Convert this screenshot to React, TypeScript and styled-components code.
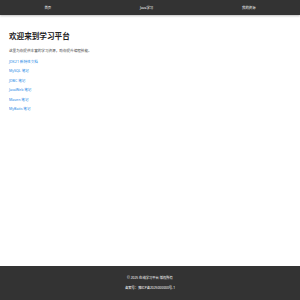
import React from 'react';
import styled, { createGlobalStyle } from 'styled-components';

const GlobalStyle = createGlobalStyle`
  html, body {
    margin: 0;
    padding: 0;
    background: #ffffff;
    font-family: "Noto Sans", "Noto Sans CJK SC", sans-serif;
  }
`;

const Page = styled.div`
  display: flex;
  flex-direction: column;
  min-height: 100vh;
`;

const NavBar = styled.nav`
  display: flex;
  justify-content: space-around;
  align-items: center;
  height: 15px;
  background-color: #333333;
  box-shadow: 0 1px 2px rgba(0, 0, 0, 0.25);
`;

const NavItem = styled.a`
  color: #ffffff;
  font-size: 3.4px;
  text-decoration: none;
  cursor: pointer;
`;

const Main = styled.main`
  flex: 1;
  padding: 16px 9px 0;
`;

const Title = styled.h1`
  margin: 0;
  font-size: 7.6px;
  line-height: 11px;
  font-weight: 700;
  color: #222222;
`;

const Intro = styled.p`
  margin: 6px 0 5px;
  font-size: 3.6px;
  line-height: 6px;
  color: #444444;
`;

const LinkList = styled.ul`
  list-style: none;
  margin: 0;
  padding: 0;
  display: flex;
  flex-direction: column;
  gap: 3.4px;
`;

const DocLink = styled.a`
  display: block;
  font-size: 3.6px;
  line-height: 6px;
  color: #1e88e5;
  text-decoration: none;
`;

const Footer = styled.footer`
  display: flex;
  flex-direction: column;
  align-items: center;
  gap: 5px;
  height: 34px;
  padding-top: 9px;
  box-sizing: border-box;
  background-color: #333333;
  color: #ffffff;
  font-size: 3.3px;
  line-height: 5px;
`;

const links = [
  'JDK21 新特性文档',
  'MySQL 笔记',
  'JDBC 笔记',
  'JavaWeb 笔记',
  'Maven 笔记',
  'MyBatis 笔记',
];

const App = () => {
  return (
    <Page>
      <GlobalStyle />
      <NavBar>
        <NavItem>首页</NavItem>
        <NavItem>Java学习</NavItem>
        <NavItem>我的资源</NavItem>
      </NavBar>
      <Main>
        <Title>欢迎来到学习平台</Title>
        <Intro>这里为你提供丰富的学习资源，助你提升编程技能。</Intro>
        <LinkList>
          {links.map((l) => (
            <li key={l}>
              <DocLink href="#">{l}</DocLink>
            </li>
          ))}
        </LinkList>
      </Main>
      <Footer>
        <div>© 2025 在线学习平台 版权所有</div>
        <div>备案号：豫ICP备2025000000号-1</div>
      </Footer>
    </Page>
  );
};

export default App;
